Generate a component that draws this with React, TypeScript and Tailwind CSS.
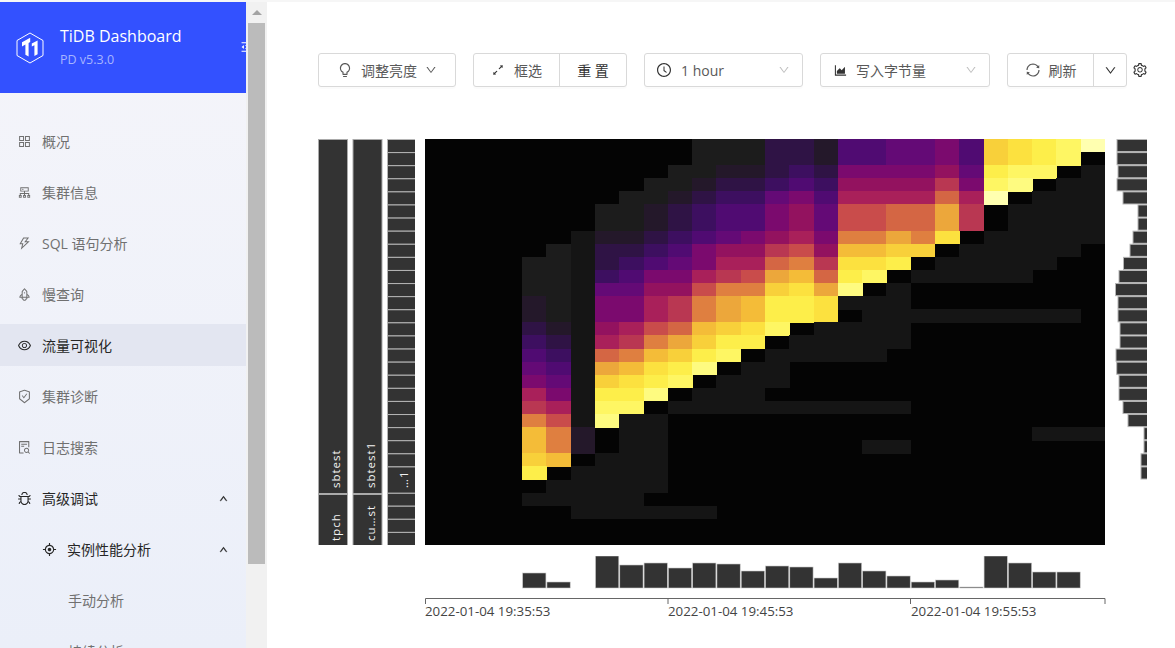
import React from "react";
import {
  AiOutlineAppstore,
  AiOutlineCluster,
  AiOutlineThunderbolt,
  AiOutlineRocket,
  AiOutlineEye,
  AiOutlineSafetyCertificate,
  AiOutlineFileSearch,
  AiOutlineBug,
  AiOutlineAim,
  AiOutlineBulb,
  AiOutlineDown,
  AiOutlineUp,
  AiOutlineClockCircle,
  AiOutlineAreaChart,
  AiOutlineSync,
  AiOutlineSetting,
  AiOutlineArrowsAlt,
  AiOutlineMenuFold,
} from "react-icons/ai";

const font = '"Open Sans","Noto Sans CJK SC",sans-serif';

const palette: Record<string, string> = {
  "0": "#040404",
  "1": "#151515",
  "2": "#1c1c1c",
  "3": "#24182a",
  "4": "#2f1345",
  "5": "#3d0f60",
  "6": "#500b72",
  "7": "#640a76",
  "8": "#7b0a6e",
  "9": "#93125f",
  a: "#a9205a",
  b: "#b93752",
  c: "#c94c4b",
  d: "#d46644",
  e: "#df7f40",
  f: "#eca73b",
  g: "#f4bc38",
  h: "#f8d03a",
  i: "#fce13f",
  j: "#fdee4a",
  k: "#fef663",
  l: "#fefb80",
  m: "#ffffb0",
};

const grid = [
  "00000000000222443667786hijkm",
  "00000000000222443667786hijk0",
  "000000000022334548888" + "97jkk01",
  "00000000022344565" + "9999b8kl011",
  "000000002234557" + "86aaaadam0111",
  "0000000223" + "4566897ccddfb01111",
  "0000000223" + "4566897ccddfb01111",
  "0000001334" + "56789a8eefei011111",
  "0000021445" + "6899bc9gghh0111110",
  "0000221456" + "78aadebiij01111100",
  "0000221568" + "8abcfgdjk011111000",
  "0000221779" + "9ceehifl0100000000",
  "0000321888".slice(0, 7) + "88" + "ab" + "efg" + "jji" + "111" + "00000000",
  "0000321" + "88" + "ab" + "efg" + "jji" + "0" + "111111111" + "0",
  "0000431" + "9a" + "cd" + "ghi" + "k0" + "1111" + "00000000",
  "0000541" + "ab" + "ef" + "hjj" + "0" + "11111" + "00000000",
  "0000651" + "de" + "gh" + "jk" + "0" + "11111" + "000000000",
  "0000761" + "fg" + "ij" + "l0" + "11" + "0000000000000",
  "0000871" + "hi" + "jk" + "0" + "111" + "0000000000000",
  "0000a81" + "jj" + "l0" + "111" + "00000000000000",
  "0000ba1" + "kk" + "0" + "1111111111" + "00000000",
  "0000ec1" + "l" + "11" + "000000000000000000",
  "0000ge3" + "0" + "11" + "000000000000000" + "111",
  "0000ge3" + "0" + "11" + "00000000" + "11" + "00000000",
  "0000hg0" + "111" + "000000000000000000",
  "0000j0" + "1111" + "000000000000000000",
  "00000" + "11111" + "000000000000000000",
  "0000" + "11111" + "0000000000000000000",
  "000000" + "111111" + "0000000000000000",
  "0000000000000000000000000000",
  "0000000000000000000000000000",
];

const COL = 680 / 28;
const ROW = 406 / 31;

function Heatmap() {
  return (
    <svg width={680} height={406} className="block shrink-0" shapeRendering="crispEdges">
      <rect width={680} height={406} fill={palette["0"]} />
      {grid.map((row, r) =>
        row.split("").map((ch, c) =>
          ch === "0" ? null : (
            <rect
              key={`${r}-${c}`}
              x={c * COL}
              y={r * ROW}
              width={COL + 0.4}
              height={ROW + 0.4}
              fill={palette[ch]}
            />
          ),
        ),
      )}
    </svg>
  );
}

const labelFont = { fontFamily: font, fontSize: 11.5, letterSpacing: 1 };

function VLabel({ x, y, text }: { x: number; y: number; text: string }) {
  return (
    <text
      transform={`translate(${x} ${y}) rotate(-90)`}
      fill="#f2f2f2"
      style={labelFont}
    >
      {text}
    </text>
  );
}

function LeftAxis() {
  const thin: number[] = [];
  for (let i = 0; i < 31; i++) if (i !== 25 && i !== 26) thin.push(i);
  return (
    <svg width={97} height={406} className="block shrink-0">
      <rect x={0.5} y={0.5} width={29} height={354} fill="#333" stroke="#aaa" />
      <rect x={0.5} y={355.5} width={29} height={51} fill="#333" stroke="#aaa" />
      <rect x={35} y={0.5} width={29} height={354} fill="#333" stroke="#aaa" />
      <rect x={35} y={355.5} width={29} height={51} fill="#333" stroke="#aaa" />
      {thin.map((i) => (
        <rect key={i} x={69.5} y={i * ROW + 0.5} width={28} height={ROW} fill="#333" stroke="#b5b5b5" />
      ))}
      <rect x={69.5} y={25 * ROW + 0.5} width={28} height={ROW * 2} fill="#333" stroke="#b5b5b5" />
      <VLabel x={22} y={349} text="sbtest" />
      <VLabel x={22} y={402} text="tpch" />
      <VLabel x={57} y={349} text="sbtest1" />
      <VLabel x={57} y={402} text="cu…st" />
      <VLabel x={90} y={349} text="…1" />
    </svg>
  );
}

const rightEdges = [
  1117, 1117, 1118, 1117, 1123, 1138, 1138, 1133, 1130, 1123.5, 1119, 1115.5, 1118, 1118, 1120, 1120,
  1116, 1116.7, 1119, 1119, 1123, 1128, 1144, 1144, 1141, 1141,
];

function RightBars() {
  return (
    <svg width={32} height={406} className="block shrink-0">
      {rightEdges.map((e, i) => (
        <rect
          key={i}
          x={e - 1115.5 + 0.5}
          y={i * ROW + 0.5}
          width={1147.5 - e}
          height={ROW - 1}
          fill="#333"
          stroke="#b5b5b5"
        />
      ))}
    </svg>
  );
}

const tops: [number, number][] = [
  [4, 573], [5, 582], [7, 556], [8, 565], [9, 563], [10, 568], [11, 563], [12, 564], [13, 571],
  [14, 566], [15, 567], [16, 578], [17, 563], [18, 571], [19, 576], [20, 582], [21, 580], [22, 587],
  [23, 556], [24, 563], [25, 572], [26, 572],
];

function BottomChart() {
  const top = 556;
  return (
    <svg width={690} height={75} className="block ml-[107px]">
      {tops.map(([c, t]) => (
        <rect
          key={c}
          x={c * COL + 0.5}
          y={t - top}
          width={COL - 1}
          height={588 - t}
          fill="#333"
          stroke="#c8c8c8"
          strokeWidth={0.6}
        />
      ))}
      <path d="M0.5 48V42.5H680V48M243 42.5V48M485.5 42.5V48" fill="none" stroke="#666" strokeWidth={1} />
      {[
        [0, "2022-01-04 19:35:53"],
        [243, "2022-01-04 19:45:53"],
        [486, "2022-01-04 19:55:53"],
      ].map(([x, t]) => (
        <text key={t as string} x={x as number} y={60} fill="#444" style={{ fontFamily: font, fontSize: 13.3 }}>
          {t}
        </text>
      ))}
    </svg>
  );
}

function Logo() {
  return (
    <svg width={28} height={32} viewBox="0 0 28 32" className="shrink-0">
      <path d="M14 1 L27 8.5 V23.5 L14 31 L1 23.5 V8.5 Z" fill="none" stroke="#fff" strokeWidth={1} />
      <path d="M6 10.2 L14.2 5.8 V10 L12.6 10.9 V24.6 L9.4 22.8 V12.6 L6 14.4 Z" fill="#fff" />
      <path d="M15.8 11.6 L21.6 8.4 V22.2 L18.4 24 V13.2 L15.8 14.6 Z" fill="#fff" />
    </svg>
  );
}

type Item = { label: string; Icon: React.ComponentType<{ size?: number; className?: string }>; dark?: boolean; active?: boolean; up?: boolean };

const items: Item[] = [
  { label: "概况", Icon: AiOutlineAppstore },
  { label: "集群信息", Icon: AiOutlineCluster },
  { label: "SQL 语句分析", Icon: AiOutlineThunderbolt },
  { label: "慢查询", Icon: AiOutlineRocket },
  { label: "流量可视化", Icon: AiOutlineEye, active: true, dark: true },
  { label: "集群诊断", Icon: AiOutlineSafetyCertificate },
  { label: "日志搜索", Icon: AiOutlineFileSearch },
  { label: "高级调试", Icon: AiOutlineBug, dark: true, up: true },
];

function Sidebar() {
  return (
    <aside className="w-[246px] shrink-0 overflow-hidden h-full bg-gradient-to-b from-[#f5f5fa] to-[#ebeff9]">
      <div className="h-[91px] bg-[#3351ff] flex items-center pl-[16px] text-white">
        <Logo />
        <div className="ml-[16px] w-[180px] shrink-0 -mt-[1px]">
          <div className="text-[16px] leading-[22px]">TiDB Dashboard</div>
          <div className="text-[12.5px] leading-[18px] mt-[4px] text-[#a7b5ff]">PD v5.3.0</div>
        </div>
        <AiOutlineMenuFold size={14} className="shrink-0 -ml-[0px] -mt-[2px]" />
      </div>
      <nav className="pt-[27px] flex flex-col gap-[9px] text-[14px]">
        {items.map(({ label, Icon, dark, active, up }) => (
          <div
            key={label}
            className={`h-[42px] flex items-center pl-[17px] pr-[16px] ${active ? "bg-[#e3e6f1]" : ""} ${dark ? "text-[#262626]" : "text-[#707070]"}`}
          >
            <Icon size={15} className={dark ? "text-[#262626]" : "text-[#707070]"} />
            <span className="ml-[10px] flex-1">{label}</span>
            {up && <AiOutlineUp size={9} className="stroke-[60] mr-[2px]" />}
          </div>
        ))}
        <div className="h-[42px] flex items-center pl-[42px] pr-[16px] text-[#262626]">
          <AiOutlineAim size={15} />
          <span className="ml-[10px] flex-1">实例性能分析</span>
          <AiOutlineUp size={9} className="stroke-[60] mr-[2px]" />
        </div>
        <div className="h-[42px] flex items-center pl-[68px] text-[#707070]">手动分析</div>
        <div className="h-[42px] flex items-center pl-[68px] text-[#707070]">持续分析</div>
      </nav>
    </aside>
  );
}

function Scrollbar() {
  return (
    <div className="w-[21px] shrink-0 h-full bg-[#f1f1f1] pl-[2px] flex flex-col">
      <div className="h-[21px] w-[17px] flex items-center justify-center pb-[1px]">
        <div className="w-0 h-0 border-x-[5px] border-x-transparent border-b-[5px] border-b-[#a3a3a3]" />
      </div>
      <div className="w-[17px] h-[541px] bg-[#bbbbbb]" />
    </div>
  );
}

const box = "h-[34px] flex items-center bg-white border border-[#d9d9d9] rounded-[3px] shadow-[0_2px_0_rgba(0,0,0,0.016)] text-[14px] text-[#595959]";

function Toolbar() {
  return (
    <div className="h-[34px] flex items-center">
      <div className={`${box} w-[138px] justify-center`}>
        <AiOutlineBulb size={16} />
        <span className="ml-[8px] mr-[8px]">调整亮度</span>
        <AiOutlineDown size={12} />
      </div>
      <div className={`${box} w-[154px] ml-[17px]`}>
        <div className="w-[86px] flex items-center justify-center border-r border-[#d9d9d9] h-full">
          <AiOutlineArrowsAlt size={14} className="text-[#333]" />
          <span className="ml-[9px]">框选</span>
        </div>
        <div className="flex-1 text-center text-[#333]">重 置</div>
      </div>
      <div className={`${box} w-[159px] ml-[17px] pl-[11px] pr-[12px] justify-between`}>
        <span className="flex items-center">
          <AiOutlineClockCircle size={16} className="text-[#333]" />
          <span className="ml-[9px]">1 hour</span>
        </span>
        <AiOutlineDown size={12} className="text-[#bfbfbf]" />
      </div>
      <div className={`${box} w-[170px] ml-[17px] pl-[12px] pr-[12px] justify-between`}>
        <span className="flex items-center">
          <AiOutlineAreaChart size={15} className="text-[#333]" />
          <span className="ml-[8px]">写入字节量</span>
        </span>
        <AiOutlineDown size={12} className="text-[#bfbfbf]" />
      </div>
      <div className={`${box} w-[120px] ml-[17px]`}>
        <div className="w-[86px] flex items-center justify-center border-r border-[#d9d9d9] h-full">
          <AiOutlineSync size={16} />
          <span className="ml-[8px]">刷新</span>
        </div>
        <div className="flex-1 flex justify-center text-[#333]">
          <AiOutlineDown size={13} />
        </div>
      </div>
      <AiOutlineSetting size={16} className="ml-[5px] text-[#333]" />
    </div>
  );
}

export default function App() {
  return (
    <div className="w-[1175px] h-[648px] overflow-hidden bg-white flex flex-col" style={{ fontFamily: font }}>
      <div className="h-[2px] bg-[#f6f6f6] shrink-0" />
      <div className="flex flex-1 min-h-0">
        <Sidebar />
        <Scrollbar />
        <main className="flex-1 pl-[51px] pt-[51px]">
          <Toolbar />
          <div className="flex mt-[52px]">
            <LeftAxis />
            <div className="ml-[10px]">
              <Heatmap />
            </div>
            <div className="ml-[10px]">
              <RightBars />
            </div>
          </div>
          <div className="mt-[11px]">
            <BottomChart />
          </div>
        </main>
      </div>
    </div>
  );
}
